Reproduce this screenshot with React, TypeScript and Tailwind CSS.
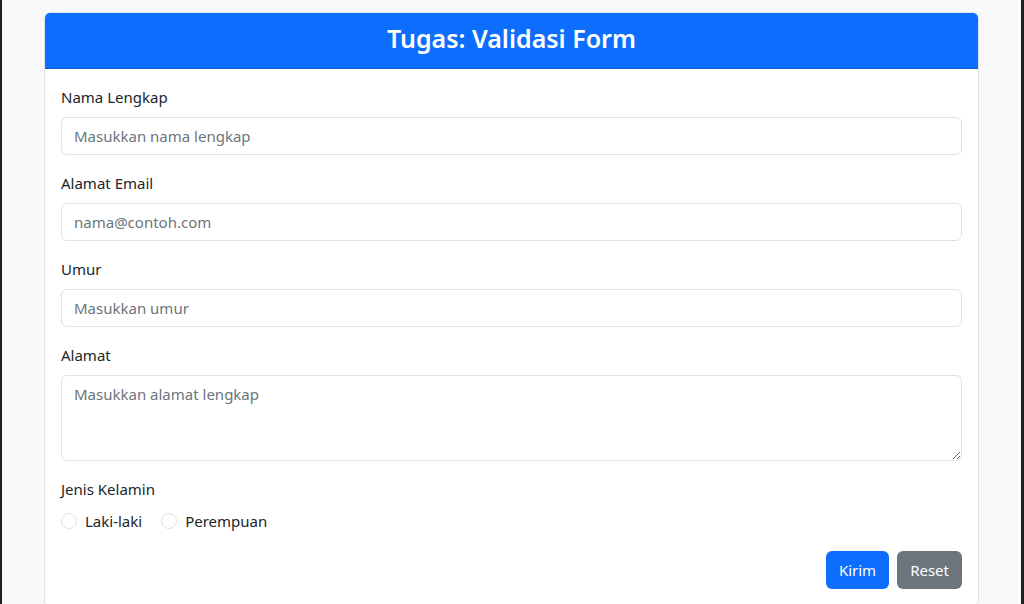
import React from "react";

const font = { fontFamily: '"Segoe UI", "Noto Sans", "Open Sans", sans-serif' };

const inputCls =
  "block w-full h-[38px] rounded-[6px] border border-[#dee2e6] bg-white px-3 text-[15px] text-[#212529] placeholder:text-[#6c757d] outline-none";

const labelCls = "block mb-2 text-[15px] leading-6";

const App: React.FC = () => {
  return (
    <div
      className="min-h-[604px] bg-[#f8f9fa] border-l-2 border-r-[3px] border-[#202124] pt-3"
      style={font}
    >
      <div className="mx-auto w-[935px] rounded-[6px] border border-[#dee2e6] bg-white overflow-hidden">
        {/* Header */}
        <div className="h-[56px] bg-[#0d6efd] border-b border-[#0b5ed7] flex items-center justify-center pb-1">
          <h3 className="text-[25px] font-semibold text-white leading-tight">Tugas: Validasi Form</h3>
        </div>

        {/* Body */}
        <form className="p-4 text-[#212529]" onSubmit={(e) => e.preventDefault()}>
          <div className="mb-4">
            <label className={labelCls}>Nama Lengkap</label>
            <input type="text" className={inputCls} placeholder="Masukkan nama lengkap" />
          </div>
          <div className="mb-4">
            <label className={labelCls}>Alamat Email</label>
            <input type="email" className={inputCls} placeholder="nama@contoh.com" />
          </div>
          <div className="mb-4">
            <label className={labelCls}>Umur</label>
            <input type="number" className={inputCls} placeholder="Masukkan umur" />
          </div>
          <div className="mb-4">
            <label className={labelCls}>Alamat</label>
            <textarea
              rows={3}
              className="block w-full h-[86px] rounded-[6px] border border-[#dee2e6] bg-white px-3 py-1.5 text-[15px] leading-6 text-[#212529] placeholder:text-[#6c757d] outline-none"
              placeholder="Masukkan alamat lengkap"
            />
          </div>
          <div className="mb-[18px]">
            <label className={labelCls}>Jenis Kelamin</label>
            <div className="flex items-center h-6">
              <label className="flex items-center mr-[19px]">
                <input
                  type="radio"
                  name="jk"
                  className="appearance-none w-4 h-4 rounded-full border border-[#dee2e6] bg-white mr-2"
                />
                <span className="text-[15px] leading-6">Laki-laki</span>
              </label>
              <label className="flex items-center">
                <input
                  type="radio"
                  name="jk"
                  className="appearance-none w-4 h-4 rounded-full border border-[#dee2e6] bg-white mr-2"
                />
                <span className="text-[15px] leading-6">Perempuan</span>
              </label>
            </div>
          </div>
          <div className="flex justify-end gap-2">
            <button
              type="submit"
              className="h-[38px] px-[13px] rounded-[6px] bg-[#0d6efd] text-white text-[15px]"
            >
              Kirim
            </button>
            <button
              type="reset"
              className="h-[38px] px-[13px] rounded-[6px] bg-[#6c757d] text-white text-[15px]"
            >
              Reset
            </button>
          </div>
        </form>
      </div>
    </div>
  );
};

export default App;
